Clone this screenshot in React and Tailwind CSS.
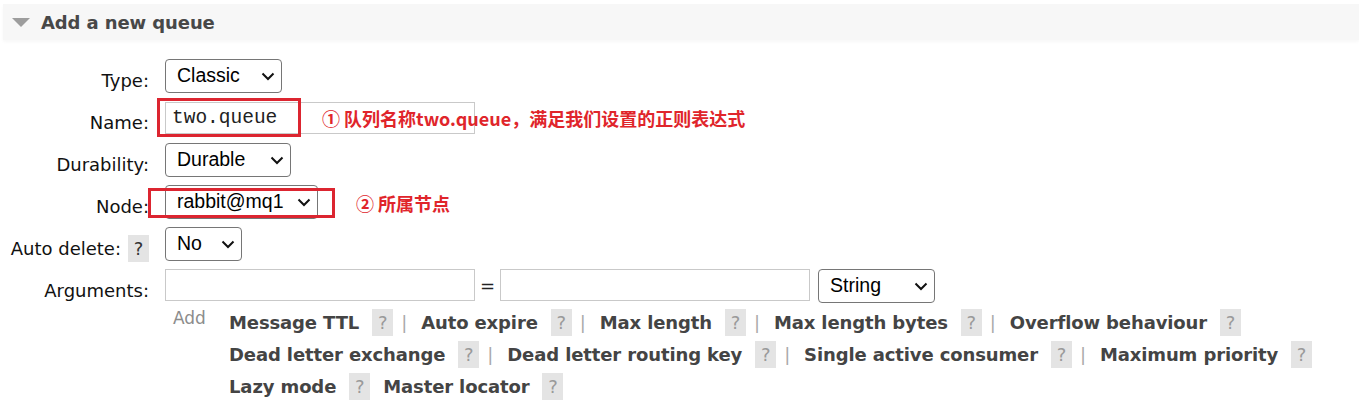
import React from 'react';

const linkRows = [
  { sep: true, items: ['Message TTL', 'Auto expire', 'Max length', 'Max length bytes', 'Overflow behaviour'] },
  { sep: true, items: ['Dead letter exchange', 'Dead letter routing key', 'Single active consumer', 'Maximum priority'] },
  { sep: false, items: ['Lazy mode', 'Master locator'] },
];

function Help({ dark }) {
  return (
    <span className={`flex h-[27px] w-[21px] shrink-0 items-center justify-center bg-[#e4e4e4] text-[18px] font-normal tracking-normal ${dark ? 'text-[#333]' : 'text-[#9a9a9a]'}`}>
      ?
    </span>
  );
}

function Chevron() {
  return (
    <svg className="pointer-events-none absolute right-[7px] top-[13px]" width="14" height="9" viewBox="0 0 14 9">
      <path d="M1.5 1.5 L7 7 L12.5 1.5" stroke="#111" strokeWidth="2" fill="none" />
    </svg>
  );
}

function Select({ value, className }) {
  return (
    <div className={`relative shrink-0 ${className}`}>
      <select
        defaultValue={value}
        className="h-[34px] w-full appearance-none rounded-[4px] border border-[#767676] bg-white pl-[11px] font-['Liberation_Sans',Arial,sans-serif] text-[19.5px] text-black outline-none"
      >
        <option>{value}</option>
      </select>
      <Chevron />
    </div>
  );
}

function Label({ children }) {
  return (
    <div className="flex h-[43px] w-[149px] shrink-0 items-center justify-end gap-[7px] text-[18px] text-[#111]">
      {children}
    </div>
  );
}

export default function App() {
  return (
    <div className="relative h-[405px] w-[1359px] overflow-hidden bg-white font-['DejaVu_Sans',Verdana,sans-serif]">
      {/* section header */}
      <div className="ml-[3px] mt-[4px] flex h-[36px] items-center bg-[#f7f7f7] shadow-[0_2px_3px_rgba(0,0,0,0.03)]">
        <svg className="ml-[9px]" width="18" height="9" viewBox="0 0 18 9">
          <path d="M0 0 L18 0 L9 9 Z" fill="#9d9d9d" />
        </svg>
        <h2 className="ml-[11px] text-[18px] font-bold tracking-[-0.1px] text-[#484848]">Add a new queue</h2>
      </div>

      <div className="mt-[19px] flex flex-col gap-[8px]">
        <div className="flex h-[34px] items-start gap-4">
          <Label>Type:</Label>
          <Select value="Classic" className="w-[117px]" />
        </div>

        <div className="relative flex h-[34px] items-start gap-4">
          <Label>Name:</Label>
          <input
            readOnly
            defaultValue="two.queue"
            className="mt-[1px] h-[32px] w-[310px] border border-[#c9c9c9] px-[6px] font-['Liberation_Mono','Courier_New',monospace] text-[19.5px] text-[#222] outline-none"
          />
          <div className="pointer-events-none absolute left-[157px] top-[-3px] h-[39px] w-[144px] border-[3px] border-[#dc2530]" />
          <div className="absolute left-[322px] top-0 flex h-[34px] items-center font-['Noto_Sans_CJK_SC',sans-serif] text-[18px] font-bold text-[#e0252b]">
            ① 队列名称two.queue，满足我们设置的正则表达式
          </div>
        </div>

        <div className="flex h-[34px] items-start gap-4">
          <Label>Durability:</Label>
          <Select value="Durable" className="w-[126px]" />
        </div>

        <div className="relative flex h-[34px] items-start gap-4">
          <Label>Node:</Label>
          <Select value="rabbit@mq1" className="w-[153px]" />
          <div className="pointer-events-none absolute left-[148px] top-[3px] h-[30px] w-[187px] border-[3px] border-[#dc2530]" />
          <div className="absolute left-[356px] top-[1px] flex h-[34px] items-center font-['Noto_Sans_CJK_SC',sans-serif] text-[18px] font-bold text-[#e0252b]">
            ② 所属节点
          </div>
        </div>

        <div className="flex h-[34px] items-start gap-4">
          <Label>
            <span>Auto delete:</span>
            <Help dark />
          </Label>
          <Select value="No" className="w-[77px]" />
        </div>

        <div className="flex h-[34px] items-start gap-4">
          <Label>Arguments:</Label>
          <div className="flex items-start">
            <input className="h-[32px] w-[310px] border border-[#c9c9c9] px-[6px] outline-none" />
            <span className="mx-[5px] flex h-[32px] items-center text-[18px] text-[#222]">=</span>
            <input className="h-[32px] w-[310px] border border-[#c9c9c9] px-[6px] outline-none" />
            <Select value="String" className="ml-[8px] w-[117px]" />
          </div>
        </div>

        <div className="-mt-[5px] flex items-start">
          <div className="w-[165px] shrink-0" />
          <span className="w-[64px] shrink-0 pl-[8px] text-[17px] leading-[24px] text-[#8c8c8c]">Add</span>
          <div className="flex flex-col">
            {linkRows.map((row, i) => (
              <div key={i} className="flex h-[32px] items-center text-[18px] font-bold tracking-[-0.12px] text-[#444]">
                {row.items.map((name, j) => (
                  <React.Fragment key={name}>
                    <span className={j > 0 && !row.sep ? 'ml-[13px]' : ''}>{name}</span>
                    <span className="ml-[13px]">
                      <Help />
                    </span>
                    {row.sep && j < row.items.length - 1 && (
                      <span className="ml-[8px] mr-[14px] font-normal text-[#aaa]">|</span>
                    )}
                  </React.Fragment>
                ))}
              </div>
            ))}
          </div>
        </div>
      </div>
    </div>
  );
}
